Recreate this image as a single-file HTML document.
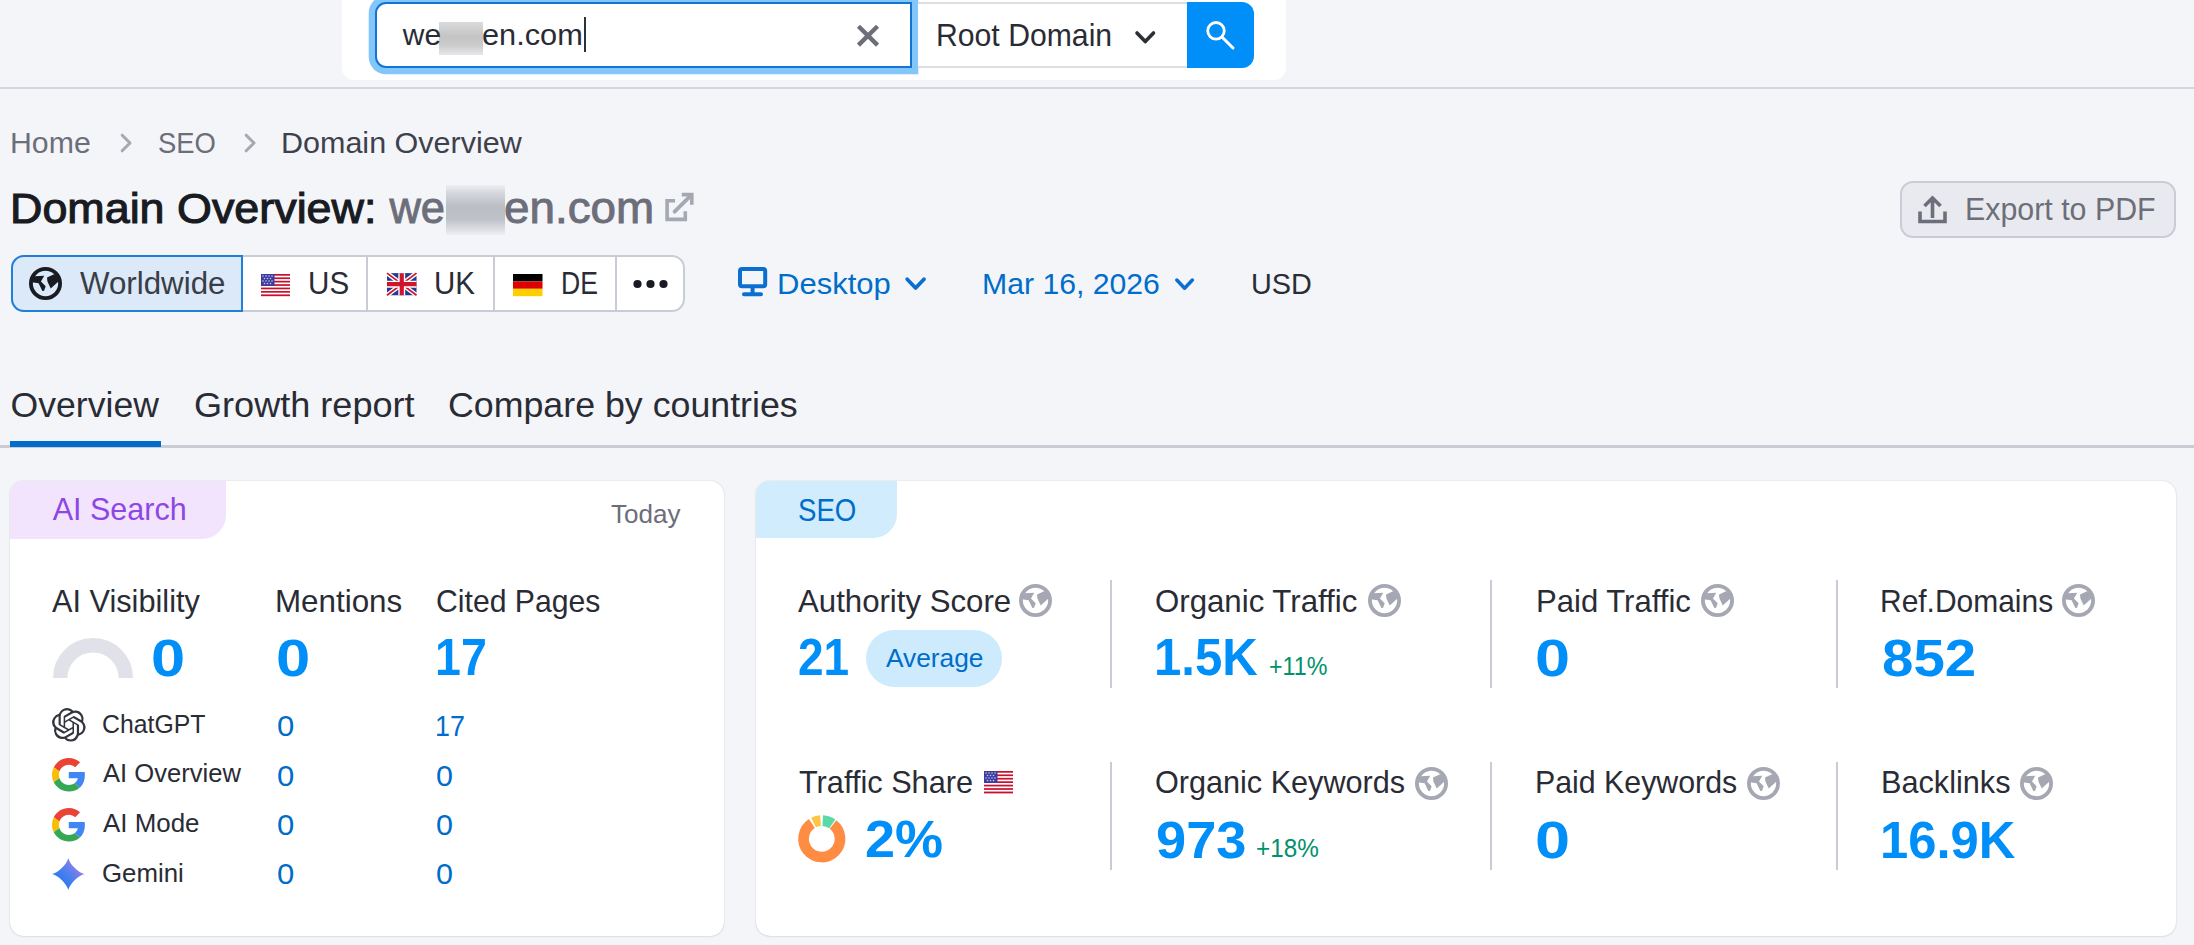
<!DOCTYPE html>
<html><head><meta charset="utf-8"><style>
html,body{margin:0;padding:0;}
body{width:2194px;height:945px;overflow:hidden;position:relative;background:#f4f5f9;font-family:"Liberation Sans",sans-serif;}
.t{position:absolute;white-space:nowrap;line-height:1;transform-origin:0 0;}
.a{position:absolute;box-sizing:border-box;}
svg{position:absolute;overflow:visible;}
</style></head><body>
<!-- top search panel -->
<div class="a" style="left:342px;top:-20px;width:944px;height:100px;background:#fff;border-radius:0 0 12px 12px;"></div>
<div class="a" style="left:0;top:87px;width:2194px;height:2px;background:#d5d7de;"></div>
<!-- input -->
<div class="a" style="left:374.5px;top:2px;width:537px;height:66px;background:#fff;border:2.5px solid #1474d4;border-right-width:2.4px;border-radius:11px 0 0 11px;box-shadow:0 0 0 6.3px #82c6fa;"></div>
<div class="a" style="left:439px;top:22px;width:44px;height:33px;background:linear-gradient(#dadbdc,#c4c4c4 45%,#cbcbcb 70%,#e6e8eb);"></div>
<div class="a" style="left:584px;top:16.6px;width:2.2px;height:35px;background:#2f3138;"></div>
<svg style="left:857px;top:24.5px" width="22" height="21.2" viewBox="0 0 22 21.2"><path d="M3 2.8L19 18.6M19 2.8L3 18.6" stroke="#6c6e79" stroke-width="4.4" stroke-linecap="square"/></svg>
<!-- select -->
<div class="a" style="left:917.5px;top:2px;width:270px;height:66px;background:#fff;border-top:2px solid #dcdee3;border-bottom:2px solid #dcdee3;"></div>
<svg style="left:1135.4px;top:31.2px" width="20.5" height="12.6" viewBox="0 0 20.5 12.6"><path d="M2 2L10.25 10.6L18.5 2" fill="none" stroke="#2d2f36" stroke-width="3.6" stroke-linecap="round" stroke-linejoin="round"/></svg>
<div class="a" style="left:1187px;top:2px;width:66.7px;height:66px;background:#008ff8;border-radius:0 12px 12px 0;"></div>
<svg style="left:1200px;top:15px" width="40" height="40" viewBox="0 0 40 40"><circle cx="16" cy="15.8" r="8.3" fill="none" stroke="#fff" stroke-width="2.8"/><path d="M22 22L33 33" stroke="#fff" stroke-width="3" stroke-linecap="round"/></svg>

<!-- breadcrumbs chevrons -->
<svg style="left:120.4px;top:133.4px" width="12.4" height="20" viewBox="0 0 12.4 20"><path d="M2.2 2.2L10 10L2.2 17.8" fill="none" stroke="#a5a8b2" stroke-width="3" stroke-linecap="round" stroke-linejoin="round"/></svg>
<svg style="left:244.2px;top:133.4px" width="12.4" height="20" viewBox="0 0 12.4 20"><path d="M2.2 2.2L10 10L2.2 17.8" fill="none" stroke="#a5a8b2" stroke-width="3" stroke-linecap="round" stroke-linejoin="round"/></svg>
<!-- title blur -->
<div class="a" style="left:446px;top:185.2px;width:59px;height:49.5px;background:linear-gradient(#eceef2,#d4d5db 18%,#bcbec6 42%,#bfc1c8 68%,#dcdde2 88%,#eeeff3);"></div>
<svg style="left:660px;top:188px" width="40" height="40" viewBox="0 0 40 40"><path d="M15.1 12.8H7.1V31.4H25.3V23.2" fill="none" stroke="#a5a8b2" stroke-width="3.6"/><path d="M14.6 23.7L31 7.3" fill="none" stroke="#a5a8b2" stroke-width="3.8" stroke-linecap="round"/><path d="M21.8 6.6H31.8V16.8" fill="none" stroke="#a5a8b2" stroke-width="3.6"/></svg>

<!-- export button -->
<div class="a" style="left:1900px;top:180.5px;width:275.5px;height:57.5px;background:#e9eaef;border:2px solid #c9ccd4;border-radius:13px;"></div>
<svg style="left:1918.4px;top:195px" width="29" height="28.5" viewBox="0 0 29 28.5"><path d="M14.5 23V3.5M6.5 11L14.5 3L22.5 11" fill="none" stroke="#6c6e79" stroke-width="3.6"/><path d="M2 16.5V26.5H27V16.5" fill="none" stroke="#6c6e79" stroke-width="3.6"/></svg>

<!-- location group -->
<div class="a" style="left:10.5px;top:255px;width:674.5px;height:57px;background:#fff;border:2px solid #c9ccd4;border-radius:13px;"></div>
<div class="a" style="left:10.5px;top:255px;width:232px;height:57px;background:#dbe9f8;border:2px solid #1f7fd9;border-radius:13px 0 0 13px;"></div>
<div class="a" style="left:366px;top:256px;width:2px;height:55px;background:#c9ccd4;"></div>
<div class="a" style="left:493px;top:256px;width:2px;height:55px;background:#c9ccd4;"></div>
<div class="a" style="left:615px;top:256px;width:2px;height:55px;background:#c9ccd4;"></div>
<svg style="left:29px;top:267px" width="33" height="33" viewBox="0 0 24 24"><defs><clipPath id="gc"><circle cx="12" cy="12" r="11"/></clipPath></defs><circle cx="12" cy="12" r="10.6" fill="none" stroke="#191b23" stroke-width="2.8"/><g clip-path="url(#gc)" fill="#191b23"><path d="M0 6.9L11.1 6.4L8.7 10.6L12.1 14L11 17.2L9.7 17.4L7 11.8L0 10.9Z"/><path d="M13.1 7.6L18.2 5.3L24 7L24 10.2L21.2 10.8L15.8 15.6L13.4 10.6Z"/></g></svg>
<svg style="left:261px;top:273.7px" width="29" height="22.2" viewBox="0 0 29 22.2"><rect width="29" height="22.2" fill="#fff"/><g fill="#c8102e"><rect y="0" width="29" height="1.7"/><rect y="3.4" width="29" height="1.7"/><rect y="6.8" width="29" height="1.7"/><rect y="10.2" width="29" height="1.7"/><rect y="13.6" width="29" height="1.7"/><rect y="17" width="29" height="1.7"/><rect y="20.4" width="29" height="1.8"/></g><rect width="13.5" height="11.9" fill="#3c3b9e"/><g fill="#c9c9ee"><circle cx="2" cy="2" r=".8"/><circle cx="5" cy="2" r=".8"/><circle cx="8" cy="2" r=".8"/><circle cx="11" cy="2" r=".8"/><circle cx="3.5" cy="4.5" r=".8"/><circle cx="6.5" cy="4.5" r=".8"/><circle cx="9.5" cy="4.5" r=".8"/><circle cx="2" cy="7" r=".8"/><circle cx="5" cy="7" r=".8"/><circle cx="8" cy="7" r=".8"/><circle cx="11" cy="7" r=".8"/><circle cx="3.5" cy="9.5" r=".8"/><circle cx="6.5" cy="9.5" r=".8"/><circle cx="9.5" cy="9.5" r=".8"/></g></svg>
<svg style="left:387.1px;top:273.4px" width="29.5" height="22.4" viewBox="0 0 60 45"><rect width="60" height="45" fill="#1f3a93"/><path d="M0 0L60 45M60 0L0 45" stroke="#fff" stroke-width="9"/><path d="M0 0L60 45M60 0L0 45" stroke="#cf142b" stroke-width="3.5"/><path d="M30 0V45M0 22.5H60" stroke="#fff" stroke-width="14"/><path d="M30 0V45M0 22.5H60" stroke="#cf142b" stroke-width="8.5"/></svg>
<svg style="left:513.4px;top:273.6px" width="29.5" height="22.2" viewBox="0 0 3 3" preserveAspectRatio="none"><rect width="3" height="1" fill="#000"/><rect y="1" width="3" height="1" fill="#dd0000"/><rect y="2" width="3" height="1" fill="#ffce00"/></svg>
<svg style="left:632px;top:279px" width="38" height="10" viewBox="0 0 38 10"><circle cx="5.5" cy="5" r="4.1" fill="#191b23"/><circle cx="18.5" cy="5" r="4.1" fill="#191b23"/><circle cx="31.5" cy="5" r="4.1" fill="#191b23"/></svg>
<!-- desktop / date -->
<svg style="left:737.6px;top:266.8px" width="29.2" height="29.5" viewBox="0 0 29.2 29.5"><rect x="2" y="2" width="25.2" height="17.2" rx="2" fill="none" stroke="#0a6fd0" stroke-width="4"/><path d="M14.6 21V25.5M6 27.3H23" stroke="#0a6fd0" stroke-width="4" stroke-linecap="round"/></svg>
<svg style="left:905px;top:277.4px" width="21.2" height="13.5" viewBox="0 0 21.2 13.5"><path d="M2.2 2.2L10.6 11L19 2.2" fill="none" stroke="#0a6fd0" stroke-width="3.8" stroke-linecap="round" stroke-linejoin="round"/></svg>
<svg style="left:1174.3px;top:277.6px" width="21.2" height="12.5" viewBox="0 0 21.2 13.5"><path d="M2.2 2.2L10.6 11L19 2.2" fill="none" stroke="#0a6fd0" stroke-width="3.8" stroke-linecap="round" stroke-linejoin="round"/></svg>

<!-- tabs -->
<div class="a" style="left:0;top:445.3px;width:2194px;height:2.3px;background:#c9ccd4;"></div>
<div class="a" style="left:10.4px;top:441.2px;width:151px;height:6px;background:#006dca;"></div>

<!-- cards -->
<div class="a" style="left:10px;top:480.5px;width:713.5px;height:455.5px;background:#fff;border-radius:14px;box-shadow:0 0 1.5px rgba(25,27,35,0.22), 0 1px 2px rgba(25,27,35,0.06);"></div>
<div class="a" style="left:10px;top:480.5px;width:216px;height:58px;background:#f2e4fc;border-radius:14px 0 24px 0;"></div>
<div class="a" style="left:755.6px;top:480.6px;width:1420.8px;height:455.9px;background:#fff;border-radius:14px;box-shadow:0 0 1.5px rgba(25,27,35,0.22), 0 1px 2px rgba(25,27,35,0.06);"></div>
<div class="a" style="left:755.6px;top:480.6px;width:141.2px;height:57.8px;background:#d1ecfc;border-radius:14px 0 24px 0;"></div>

<!-- gauge -->
<svg style="left:53px;top:638.4px" width="80" height="40" viewBox="0 0 80 40"><path d="M7.2 40A32.8 32.8 0 0 1 72.8 40" fill="none" stroke="#e0e1e9" stroke-width="14.4"/></svg>
<!-- ChatGPT -->
<svg style="left:51.9px;top:708px" width="33.6" height="33.6" viewBox="0 0 24 24"><path fill="#33353d" d="M22.2819 9.8211a5.9847 5.9847 0 0 0-.5157-4.9108 6.0462 6.0462 0 0 0-6.5098-2.9A6.0651 6.0651 0 0 0 4.9807 4.1818a5.9847 5.9847 0 0 0-3.9977 2.9 6.0462 6.0462 0 0 0 .7427 7.0966 5.98 5.98 0 0 0 .511 4.9107 6.051 6.051 0 0 0 6.5146 2.9001A5.9847 5.9847 0 0 0 13.2599 24a6.0557 6.0557 0 0 0 5.7718-4.2058 5.9894 5.9894 0 0 0 3.9977-2.9001 6.0557 6.0557 0 0 0-.7475-7.0729zm-9.022 12.6081a4.4755 4.4755 0 0 1-2.8764-1.0408l.1419-.0804 4.7783-2.7582a.7948.7948 0 0 0 .3927-.6813v-6.7369l2.02 1.1686a.071.071 0 0 1 .038.052v5.5826a4.504 4.504 0 0 1-4.4945 4.4944zm-9.6607-4.1254a4.4708 4.4708 0 0 1-.5346-3.0137l.142.0852 4.783 2.7582a.7712.7712 0 0 0 .7806 0l5.8428-3.3685v2.3324a.0804.0804 0 0 1-.0332.0615L9.74 19.9502a4.4992 4.4992 0 0 1-6.1408-1.6464zM2.3408 7.8956a4.485 4.485 0 0 1 2.3655-1.9728V11.6a.7664.7664 0 0 0 .3879.6765l5.8144 3.3543-2.0201 1.1685a.0757.0757 0 0 1-.071 0l-4.8303-2.7865A4.504 4.504 0 0 1 2.3408 7.872zm16.5963 3.8558L13.1038 8.364 15.1192 7.2a.0757.0757 0 0 1 .071 0l4.8303 2.7913a4.4944 4.4944 0 0 1-.6765 8.1042v-5.6772a.79.79 0 0 0-.407-.667zm2.0107-3.0231l-.142-.0852-4.7735-2.7818a.7759.7759 0 0 0-.7854 0L9.409 9.2297V6.8974a.0662.0662 0 0 1 .0284-.0615l4.8303-2.7866a4.4992 4.4992 0 0 1 6.6802 4.66zM8.3065 12.863l-2.02-1.1638a.0804.0804 0 0 1-.038-.0567V6.0742a4.4992 4.4992 0 0 1 7.3757-3.4537l-.142.0805L8.704 5.459a.7948.7948 0 0 0-.3927.6813zm1.0976-2.3654l2.602-1.4998 2.6069 1.4998v2.9994l-2.5974 1.4997-2.6067-1.4997Z"/></svg>
<!-- Google G x2 -->
<svg style="left:51.9px;top:757.9px" width="33.6" height="33.6" viewBox="0 0 48 48"><path fill="#EA4335" d="M24 9.5c3.54 0 6.71 1.22 9.21 3.6l6.85-6.85C35.9 2.38 30.47 0 24 0 14.62 0 6.51 5.38 2.56 13.22l7.98 6.19C12.43 13.72 17.74 9.5 24 9.5z"/><path fill="#4285F4" d="M46.98 24.55c0-1.57-.15-3.09-.38-4.55H24v9.02h12.94c-.58 2.960-2.26 5.48-4.78 7.18l7.73 6c4.51-4.18 7.09-10.36 7.09-17.650z"/><path fill="#FBBC05" d="M10.53 28.59c-.48-1.45-.76-2.99-.76-4.59s.27-3.14.76-4.590l-7.98-6.19C.92 16.46 0 20.12 0 24c0 3.88.92 7.54 2.56 10.78l7.97-6.19z"/><path fill="#34A853" d="M24 48c6.48 0 11.93-2.13 15.89-5.81l-7.730-6c-2.15 1.45-4.92 2.3-8.16 2.3-6.26 0-11.57-4.22-13.47-9.91l-7.98 6.19C6.51 42.62 14.62 48 24 48z"/></svg>
<svg style="left:51.9px;top:807.7px" width="33.6" height="33.6" viewBox="0 0 48 48"><path fill="#EA4335" d="M24 9.5c3.54 0 6.71 1.22 9.21 3.6l6.85-6.85C35.9 2.38 30.47 0 24 0 14.62 0 6.51 5.38 2.56 13.22l7.98 6.19C12.43 13.72 17.74 9.5 24 9.5z"/><path fill="#4285F4" d="M46.98 24.55c0-1.57-.15-3.09-.38-4.55H24v9.02h12.94c-.58 2.960-2.26 5.48-4.78 7.18l7.73 6c4.51-4.18 7.09-10.36 7.09-17.650z"/><path fill="#FBBC05" d="M10.53 28.59c-.48-1.45-.76-2.99-.76-4.59s.27-3.14.76-4.590l-7.98-6.19C.92 16.46 0 20.12 0 24c0 3.88.92 7.54 2.56 10.78l7.97-6.19z"/><path fill="#34A853" d="M24 48c6.48 0 11.93-2.13 15.89-5.81l-7.730-6c-2.15 1.45-4.92 2.3-8.16 2.3-6.26 0-11.57-4.22-13.47-9.91l-7.98 6.19C6.51 42.62 14.62 48 24 48z"/></svg>
<!-- Gemini -->
<svg style="left:52px;top:858px" width="32.6" height="32.1" viewBox="0 0 24 24" preserveAspectRatio="none"><defs><linearGradient id="gg" x1="0.2" y1="0.85" x2="0.85" y2="0.2"><stop offset="0" stop-color="#1f78ef"/><stop offset=".5" stop-color="#4f80ee"/><stop offset="1" stop-color="#a07ee8"/></linearGradient></defs><path fill="url(#gg)" d="M12 0C12.9 4.5 19.5 11.1 24 12C19.5 12.9 12.9 19.5 12 24C11.1 19.5 4.5 12.9 0 12C4.5 11.1 11.1 4.5 12 0Z"/></svg>

<!-- SEO card extras -->
<div class="a" style="left:866.1px;top:629.8px;width:136.4px;height:57.4px;background:#cdebfc;border-radius:29px;"></div>
<div class="a" style="left:1110px;top:580.4px;width:2px;height:107.6px;background:#c9ccd4;"></div>
<div class="a" style="left:1489.5px;top:580.4px;width:2px;height:107.6px;background:#c9ccd4;"></div>
<div class="a" style="left:1835.6px;top:580.4px;width:2px;height:107.6px;background:#c9ccd4;"></div>
<div class="a" style="left:1110px;top:762.4px;width:2px;height:107.4px;background:#c9ccd4;"></div>
<div class="a" style="left:1489.5px;top:762.4px;width:2px;height:107.4px;background:#c9ccd4;"></div>
<div class="a" style="left:1835.6px;top:762.4px;width:2px;height:107.4px;background:#c9ccd4;"></div>
<svg style="left:984.2px;top:770.7px" width="29" height="22.4" viewBox="0 0 29 22.2" preserveAspectRatio="none"><rect width="29" height="22.2" fill="#fff"/><g fill="#c8102e"><rect y="0" width="29" height="1.7"/><rect y="3.4" width="29" height="1.7"/><rect y="6.8" width="29" height="1.7"/><rect y="10.2" width="29" height="1.7"/><rect y="13.6" width="29" height="1.7"/><rect y="17" width="29" height="1.7"/><rect y="20.4" width="29" height="1.8"/></g><rect width="13.5" height="11.9" fill="#3c3b9e"/><g fill="#c9c9ee"><circle cx="2" cy="2" r=".8"/><circle cx="5" cy="2" r=".8"/><circle cx="8" cy="2" r=".8"/><circle cx="11" cy="2" r=".8"/><circle cx="3.5" cy="4.5" r=".8"/><circle cx="6.5" cy="4.5" r=".8"/><circle cx="9.5" cy="4.5" r=".8"/><circle cx="2" cy="7" r=".8"/><circle cx="5" cy="7" r=".8"/><circle cx="8" cy="7" r=".8"/><circle cx="11" cy="7" r=".8"/><circle cx="3.5" cy="9.5" r=".8"/><circle cx="6.5" cy="9.5" r=".8"/><circle cx="9.5" cy="9.5" r=".8"/></g></svg>
<!-- donut -->
<svg style="left:798.3px;top:815.3px" width="47.6" height="47.6" viewBox="0 0 48 48"><g fill="none" stroke-width="10.8"><path d="M35.33 9.50A18.4 18.4 0 1 1 13.98 8.57" stroke="#ff8c43"/><path d="M15.65 7.61A18.4 18.4 0 0 1 22.72 5.64" stroke="#fcc548"/><path d="M24.96 5.63A18.4 18.4 0 0 1 34.55 8.93" stroke="#5ad8a6"/></g></svg>
<svg style="left:1019.3px;top:584px" width="33" height="33" viewBox="0 0 24 24"><defs><clipPath id="gc0"><circle cx="12" cy="12" r="11"/></clipPath></defs><circle cx="12" cy="12" r="10.6" fill="none" stroke="#a5a8b2" stroke-width="2.8"/><g clip-path="url(#gc0)" fill="#a5a8b2"><path d="M0 6.9L11.1 6.4L8.7 10.6L12.1 14L11 17.2L9.7 17.4L7 11.8L0 10.9Z"/><path d="M13.1 7.6L18.2 5.3L24 7L24 10.2L21.2 10.8L15.8 15.6L13.4 10.6Z"/></g></svg>
<svg style="left:1367.8px;top:584.3px" width="33" height="33" viewBox="0 0 24 24"><defs><clipPath id="gc1"><circle cx="12" cy="12" r="11"/></clipPath></defs><circle cx="12" cy="12" r="10.6" fill="none" stroke="#a5a8b2" stroke-width="2.8"/><g clip-path="url(#gc1)" fill="#a5a8b2"><path d="M0 6.9L11.1 6.4L8.7 10.6L12.1 14L11 17.2L9.7 17.4L7 11.8L0 10.9Z"/><path d="M13.1 7.6L18.2 5.3L24 7L24 10.2L21.2 10.8L15.8 15.6L13.4 10.6Z"/></g></svg>
<svg style="left:1701px;top:584px" width="33" height="33" viewBox="0 0 24 24"><defs><clipPath id="gc2"><circle cx="12" cy="12" r="11"/></clipPath></defs><circle cx="12" cy="12" r="10.6" fill="none" stroke="#a5a8b2" stroke-width="2.8"/><g clip-path="url(#gc2)" fill="#a5a8b2"><path d="M0 6.9L11.1 6.4L8.7 10.6L12.1 14L11 17.2L9.7 17.4L7 11.8L0 10.9Z"/><path d="M13.1 7.6L18.2 5.3L24 7L24 10.2L21.2 10.8L15.8 15.6L13.4 10.6Z"/></g></svg>
<svg style="left:2061.7px;top:584px" width="33" height="33" viewBox="0 0 24 24"><defs><clipPath id="gc3"><circle cx="12" cy="12" r="11"/></clipPath></defs><circle cx="12" cy="12" r="10.6" fill="none" stroke="#a5a8b2" stroke-width="2.8"/><g clip-path="url(#gc3)" fill="#a5a8b2"><path d="M0 6.9L11.1 6.4L8.7 10.6L12.1 14L11 17.2L9.7 17.4L7 11.8L0 10.9Z"/><path d="M13.1 7.6L18.2 5.3L24 7L24 10.2L21.2 10.8L15.8 15.6L13.4 10.6Z"/></g></svg>
<svg style="left:1415px;top:766.9px" width="33" height="33" viewBox="0 0 24 24"><defs><clipPath id="gc4"><circle cx="12" cy="12" r="11"/></clipPath></defs><circle cx="12" cy="12" r="10.6" fill="none" stroke="#a5a8b2" stroke-width="2.8"/><g clip-path="url(#gc4)" fill="#a5a8b2"><path d="M0 6.9L11.1 6.4L8.7 10.6L12.1 14L11 17.2L9.7 17.4L7 11.8L0 10.9Z"/><path d="M13.1 7.6L18.2 5.3L24 7L24 10.2L21.2 10.8L15.8 15.6L13.4 10.6Z"/></g></svg>
<svg style="left:1746.8px;top:766.9px" width="33" height="33" viewBox="0 0 24 24"><defs><clipPath id="gc5"><circle cx="12" cy="12" r="11"/></clipPath></defs><circle cx="12" cy="12" r="10.6" fill="none" stroke="#a5a8b2" stroke-width="2.8"/><g clip-path="url(#gc5)" fill="#a5a8b2"><path d="M0 6.9L11.1 6.4L8.7 10.6L12.1 14L11 17.2L9.7 17.4L7 11.8L0 10.9Z"/><path d="M13.1 7.6L18.2 5.3L24 7L24 10.2L21.2 10.8L15.8 15.6L13.4 10.6Z"/></g></svg>
<svg style="left:2020.4px;top:766.9px" width="33" height="33" viewBox="0 0 24 24"><defs><clipPath id="gc6"><circle cx="12" cy="12" r="11"/></clipPath></defs><circle cx="12" cy="12" r="10.6" fill="none" stroke="#a5a8b2" stroke-width="2.8"/><g clip-path="url(#gc6)" fill="#a5a8b2"><path d="M0 6.9L11.1 6.4L8.7 10.6L12.1 14L11 17.2L9.7 17.4L7 11.8L0 10.9Z"/><path d="M13.1 7.6L18.2 5.3L24 7L24 10.2L21.2 10.8L15.8 15.6L13.4 10.6Z"/></g></svg>

<span class="t" style="left:402.8px;top:20.0px;font-size:30px;color:#2a2c35;">we</span>
<span class="t" style="left:482.0px;top:20.0px;font-size:30px;color:#2a2c35;transform:scaleX(1.0240);">en.com</span>
<span class="t" style="left:935.9px;top:19.9px;font-size:30.5px;color:#2a2c35;transform:scaleX(0.9895);">Root Domain</span>
<span class="t" style="left:10.1px;top:128.0px;font-size:30px;color:#6c6e79;transform:scaleX(1.0085);">Home</span>
<span class="t" style="left:158.0px;top:128.0px;font-size:30px;color:#6c6e79;transform:scaleX(0.9128);">SEO</span>
<span class="t" style="left:281.3px;top:128.0px;font-size:30px;color:#3e414c;transform:scaleX(1.0167);">Domain Overview</span>
<span class="t" style="left:9.8px;top:186.9px;font-size:43px;color:#191b23;transform:scaleX(1.0431);-webkit-text-stroke:1.1px #191b23;">Domain Overview:</span>
<span class="t" style="left:389.4px;top:186.5px;font-size:43.5px;color:#6c6e79;-webkit-text-stroke:0.9px #6c6e79;">we</span>
<span class="t" style="left:504.3px;top:186.5px;font-size:43.5px;color:#6c6e79;transform:scaleX(1.0523);-webkit-text-stroke:0.9px #6c6e79;">en.com</span>
<span class="t" style="left:80.1px;top:268.0px;font-size:31px;color:#3a3d47;transform:scaleX(1.0091);">Worldwide</span>
<span class="t" style="left:308.4px;top:268.4px;font-size:30.5px;color:#2a2c35;transform:scaleX(0.9711);">US</span>
<span class="t" style="left:434.1px;top:268.4px;font-size:30.5px;color:#2a2c35;transform:scaleX(0.9669);">UK</span>
<span class="t" style="left:561.3px;top:268.4px;font-size:30.5px;color:#2a2c35;transform:scaleX(0.8719);">DE</span>
<span class="t" style="left:776.6px;top:268.6px;font-size:30px;color:#006dca;transform:scaleX(1.0338);">Desktop</span>
<span class="t" style="left:981.5px;top:268.6px;font-size:30px;color:#006dca;transform:scaleX(1.0064);">Mar 16, 2026</span>
<span class="t" style="left:1251.1px;top:268.6px;font-size:30px;color:#2a2c35;transform:scaleX(0.9609);">USD</span>
<span class="t" style="left:1965.3px;top:194.0px;font-size:30.5px;color:#6c6e79;transform:scaleX(0.9952);">Export to PDF</span>
<span class="t" style="left:10.6px;top:387.9px;font-size:35.6px;color:#2a2c35;">Overview</span>
<span class="t" style="left:193.5px;top:387.9px;font-size:35.6px;color:#2a2c35;transform:scaleX(1.0142);">Growth report</span>
<span class="t" style="left:448.1px;top:387.9px;font-size:35.6px;color:#2a2c35;transform:scaleX(1.0048);">Compare by countries</span>
<span class="t" style="left:52.7px;top:494.3px;font-size:30.5px;color:#8e47e6;">AI Search</span>
<span class="t" style="left:610.7px;top:501.4px;font-size:26.5px;color:#6c6e79;transform:scaleX(0.9837);">Today</span>
<span class="t" style="left:797.9px;top:494.5px;font-size:30.5px;color:#006dca;transform:scaleX(0.9061);">SEO</span>
<span class="t" style="left:52.4px;top:585.5px;font-size:30.5px;color:#2a2c35;transform:scaleX(1.0064);">AI Visibility</span>
<span class="t" style="left:275.2px;top:585.5px;font-size:30.5px;color:#2a2c35;transform:scaleX(1.0279);">Mentions</span>
<span class="t" style="left:435.8px;top:585.5px;font-size:30.5px;color:#2a2c35;transform:scaleX(0.9897);">Cited Pages</span>
<span class="t" style="left:151.1px;top:631.6px;font-size:52px;color:#008ff8;font-weight:700;transform:scaleX(1.1800);">0</span>
<span class="t" style="left:276.2px;top:631.6px;font-size:52px;color:#008ff8;font-weight:700;transform:scaleX(1.1840);">0</span>
<span class="t" style="left:435.1px;top:631.4px;font-size:52px;color:#008ff8;font-weight:700;transform:scaleX(0.8957);">17</span>
<span class="t" style="left:101.9px;top:711.6px;font-size:25.3px;color:#2a2c35;transform:scaleX(0.9809);">ChatGPT</span>
<span class="t" style="left:276.9px;top:710.5px;font-size:29.3px;color:#006dca;transform:scaleX(1.0600);">0</span>
<span class="t" style="left:434.9px;top:710.5px;font-size:29.3px;color:#006dca;transform:scaleX(0.9183);">17</span>
<span class="t" style="left:102.9px;top:761.4px;font-size:25.3px;color:#2a2c35;transform:scaleX(1.0118);">AI Overview</span>
<span class="t" style="left:276.9px;top:760.6px;font-size:29.3px;color:#006dca;transform:scaleX(1.0600);">0</span>
<span class="t" style="left:436.4px;top:760.6px;font-size:29.3px;color:#006dca;transform:scaleX(1.0400);">0</span>
<span class="t" style="left:102.9px;top:811.3px;font-size:25.3px;color:#2a2c35;transform:scaleX(1.0243);">AI Mode</span>
<span class="t" style="left:276.9px;top:809.9px;font-size:29.3px;color:#006dca;transform:scaleX(1.0600);">0</span>
<span class="t" style="left:436.4px;top:809.9px;font-size:29.3px;color:#006dca;transform:scaleX(1.0400);">0</span>
<span class="t" style="left:101.9px;top:860.6px;font-size:25.3px;color:#2a2c35;transform:scaleX(1.0205);">Gemini</span>
<span class="t" style="left:276.9px;top:859.4px;font-size:29.3px;color:#006dca;transform:scaleX(1.0600);">0</span>
<span class="t" style="left:436.4px;top:859.4px;font-size:29.3px;color:#006dca;transform:scaleX(1.0400);">0</span>
<span class="t" style="left:798.3px;top:585.7px;font-size:30.5px;color:#2a2c35;transform:scaleX(1.0224);">Authority Score</span>
<span class="t" style="left:1155.1px;top:585.7px;font-size:30.5px;color:#2a2c35;transform:scaleX(1.0230);">Organic Traffic</span>
<span class="t" style="left:1535.5px;top:585.7px;font-size:30.5px;color:#2a2c35;transform:scaleX(1.0186);">Paid Traffic</span>
<span class="t" style="left:1880.1px;top:585.7px;font-size:30.5px;color:#2a2c35;transform:scaleX(0.9820);">Ref.Domains</span>
<span class="t" style="left:799.1px;top:767.3px;font-size:30.5px;color:#2a2c35;transform:scaleX(1.0067);">Traffic Share</span>
<span class="t" style="left:1155.1px;top:767.3px;font-size:30.5px;color:#2a2c35;transform:scaleX(1.0035);">Organic Keywords</span>
<span class="t" style="left:1535.3px;top:767.3px;font-size:30.5px;color:#2a2c35;transform:scaleX(0.9941);">Paid Keywords</span>
<span class="t" style="left:1880.8px;top:767.3px;font-size:30.5px;color:#2a2c35;transform:scaleX(1.0050);">Backlinks</span>
<span class="t" style="left:798.2px;top:631.3px;font-size:52px;color:#008ff8;font-weight:700;transform:scaleX(0.8852);">21</span>
<span class="t" style="left:886.0px;top:645.0px;font-size:26.3px;color:#006dca;">Average</span>
<span class="t" style="left:1154.2px;top:631.4px;font-size:52px;color:#008ff8;font-weight:700;transform:scaleX(0.9433);">1.5K</span>
<span class="t" style="left:1269.1px;top:654.2px;font-size:25px;color:#00916e;transform:scaleX(0.9309);">+11%</span>
<span class="t" style="left:1535.1px;top:631.8px;font-size:52px;color:#008ff8;font-weight:700;transform:scaleX(1.2120);">0</span>
<span class="t" style="left:1881.8px;top:631.8px;font-size:52px;color:#008ff8;font-weight:700;transform:scaleX(1.0854);">852</span>
<span class="t" style="left:865.1px;top:813.0px;font-size:52px;color:#008ff8;font-weight:700;transform:scaleX(1.0395);">2%</span>
<span class="t" style="left:1156.0px;top:813.9px;font-size:52px;color:#008ff8;font-weight:700;transform:scaleX(1.0431);">973</span>
<span class="t" style="left:1256.3px;top:835.9px;font-size:25px;color:#00916e;transform:scaleX(0.9715);">+18%</span>
<span class="t" style="left:1535.1px;top:813.9px;font-size:52px;color:#008ff8;font-weight:700;transform:scaleX(1.2120);">0</span>
<span class="t" style="left:1879.9px;top:813.9px;font-size:52px;color:#008ff8;font-weight:700;transform:scaleX(0.9757);">16.9K</span>
</body></html>
